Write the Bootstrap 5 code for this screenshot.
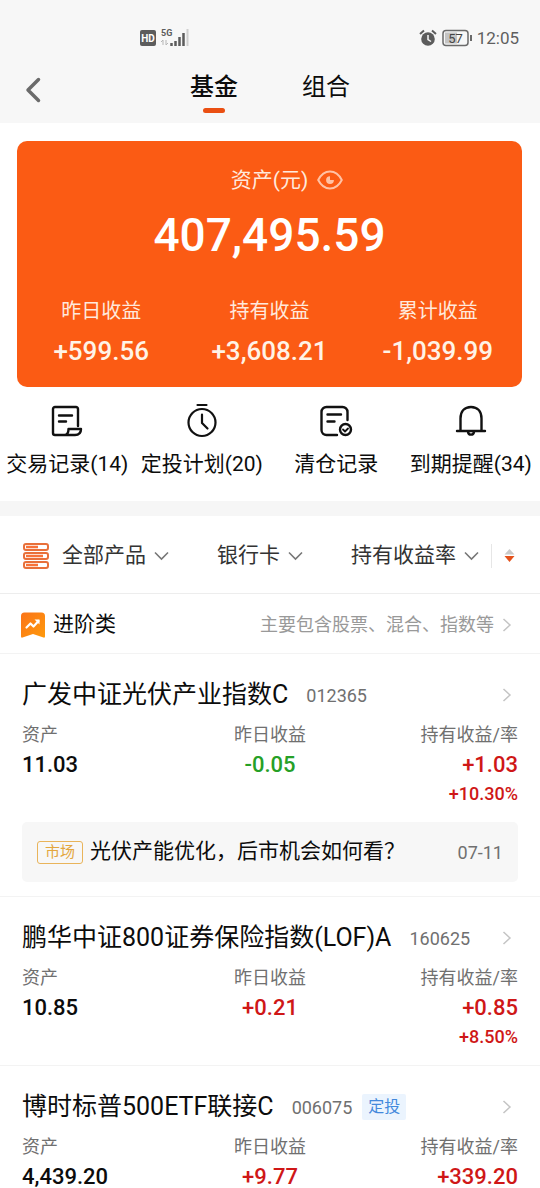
<!DOCTYPE html>
<html lang="zh-CN">
<head>
<meta charset="utf-8">
<meta name="viewport" content="width=device-width, initial-scale=1">
<title>基金</title>
<link href="https://cdn.jsdelivr.net/npm/bootstrap@5.3.0/dist/css/bootstrap.min.css" rel="stylesheet">
<style>
  :root { --brand: #fb5b14; --ink: #0c0c0c; --muted: #707070; --line: #f3f3f3; }
  body { font-family: Roboto, "Noto Sans CJK SC", sans-serif; color: var(--ink); background: #fff; }
  svg { display: block; flex: none; }
  a { color: inherit; text-decoration: none; }
  button { color: inherit; background: none; border: 0; padding: 0; }
  .top-area { background: #f7f7f7; }
  .status { height: 60px; padding: 16px 21px 0 139px; color: #5f5f5f; font-size: 17px; line-height: 44px; }
  .status-row { height: 44px; }
  .tabs-bar { display: grid; grid-template-columns: 1fr auto 1fr; height: 63px; padding: 0 25px; }
  .tab-set { gap: 64px; }
  .tab-link { font-size: 24px; line-height: 36px; padding: 9px 0 0; height: 52px; }
  .tab-link.is-on { font-weight: 500; }
  .tab-link.is-on::after { content: ""; display: block; width: 22px; height: 5px; border-radius: 3px; background: #ea4f12; margin: 3px auto 0; }
  .assets { margin: 18px 18px 0 17px; padding: 23px 0 16px; border-radius: 10px; background: var(--brand); color: #fff; }
  .assets-title { font-size: 21px; line-height: 32px; color: #ffe9dc; gap: 9px; padding-left: 35px; }
  .assets-total { font-size: 46px; line-height: 64px; font-weight: 500; margin: 7px 0 24px; }
  .stat-label { font-size: 20px; line-height: 40px; color: #ffe9dc; }
  .stat-num { font-size: 26px; line-height: 40px; font-weight: 500; color: #fff3e6; }
  .quick { padding: 16px 2px 21px 0; }
  .quick a { font-size: 21px; line-height: 32px; gap: 10px; white-space: nowrap; flex: 1 1 0; }
  .band { height: 15px; background: #f6f6f6; }
  .filters { height: 78px; padding: 2px 25px 0 22px; border-bottom: 1px solid #ededed; font-size: 21px; color: #333; }
  .filters button { gap: 8px; white-space: nowrap; }
  .sorter { border-left: 1px solid #e6e6e6; height: 24px; padding-left: 12px; margin-left: 12px; }
  .group-head { height: 60px; padding: 2px 28px 0 21px; border-bottom: 1px solid var(--line); font-size: 21px; }
  .group-note { font-size: 18px; color: #999; gap: 8px; }
  .fund { padding: 21px 22px 14px; border-bottom: 1px solid var(--line); }
  .fund-head { height: 40px; padding-right: 6px; }
  .fund-name { font-size: 25px; line-height: 40px; font-weight: 400; margin: 0 18px 0 0; }
  .fund-code { font-size: 18px; color: var(--muted); }
  .plan-tag { font-size: 16px; line-height: 26px; padding: 0 6px; margin-left: 10px; border-radius: 2px; background: #ebf4fe; color: #4389dc; }
  .figures { margin: 5px 0 0; }
  .figures dt { font-size: 18px; line-height: 30px; font-weight: 400; color: var(--muted); }
  .figures dd { font-size: 22px; line-height: 30px; font-weight: 500; margin: 0; }
  .figures .rate { font-size: 18px; line-height: 28px; }
  .up { color: #cf1717; }
  .down { color: #26a026; }
  .news { height: 60px; margin-top: 14px; padding: 0 15px; border-radius: 5px; background: #f7f7f7; font-size: 21px; }
  .news-tag { font-size: 15px; line-height: 21px; padding: 0 7px; border: 1px solid #e9b45a; border-radius: 3px; color: #e3a63f; margin-right: 7px; }
  .news time { font-size: 18px; color: var(--muted); }
</style>
</head>
<body>
<div class="vh-100 overflow-hidden">
  <header class="top-area">
    <div class="status">
      <div class="status-row d-flex align-items-center">
        <svg width="50" height="22" viewBox="0 0 50 22" aria-hidden="true">
          <rect x="1" y="3" width="16" height="16" rx="2" fill="#5c5c5c"/>
          <text x="9" y="15" font-size="10" font-weight="700" fill="#fff" text-anchor="middle">HD</text>
          <text x="22" y="9" font-size="9" font-weight="700" fill="#5c5c5c">5G</text>
          <path d="M24 18v-5l-2 2M27 13v5l2-2" fill="none" stroke="#b5b5b5"/>
          <path d="M32.500 16v3M36.500 14v5M40.500 10v9M44.500 6v13" stroke="#5c5c5c" stroke-width="2.500"/>
          <path d="M48.500 2v17" stroke="#cfcfcf" stroke-width="2"/>
        </svg>
        <svg class="ms-auto" width="18" height="18" viewBox="0 0 18 18" aria-hidden="true">
          <circle cx="9" cy="10" r="6.800" fill="#5c5c5c"/>
          <path d="M1 5l4-3.500M17 5l-4-3.500" stroke="#5c5c5c" stroke-width="2"/>
          <path d="M9 6v4.500l3 2" fill="none" stroke="#f7f7f7" stroke-width="1.500"/>
        </svg>
        <svg class="ms-1 me-1" width="32" height="18" viewBox="0 0 32 18" aria-hidden="true">
          <rect x="2" y="1.500" width="25" height="15" rx="3" fill="none" stroke="#6a6a6a" stroke-width="1.500"/>
          <rect x="4" y="3.500" width="12" height="11" fill="#c4c4c4"/>
          <text x="14.500" y="13.500" font-size="13" fill="#444" text-anchor="middle">57</text>
          <path d="M30 6v6" stroke="#6a6a6a" stroke-width="2"/>
        </svg>
        <span>12:05</span>
      </div>
    </div>
    <nav class="tabs-bar">
      <button type="button" class="text-start pb-1" aria-label="返回">
        <svg width="16" height="26" viewBox="0 0 16 26"><path d="M13.500 2.500L3 13l10.500 10.500" fill="none" stroke="#6b6b6b" stroke-width="3.500" stroke-linecap="round" stroke-linejoin="round"/></svg>
      </button>
      <div class="tab-set d-flex">
        <a href="#" class="tab-link is-on" aria-current="page">基金</a>
        <a href="#" class="tab-link">组合</a>
      </div>
    </nav>
  </header>

  <main>
    <section class="assets text-center">
      <div class="assets-title d-flex justify-content-center align-items-center">
        <span>资产(元)</span>
        <button type="button" aria-label="隐藏金额">
          <svg width="26" height="20" viewBox="0 0 26 20" fill="none" stroke="#ffc2a5" stroke-width="2">
            <path d="M1.200 10C4 4.500 8 1.500 13 1.500S22 4.500 24.800 10C22 15.500 18 18.500 13 18.500S4 15.500 1.200 10z" stroke-linejoin="round"/>
            <path d="M13 6.200a3.900 3.900 0 1 0 3.900 3.900h-3.400a.5.500 0 0 1-.5-.5z" fill="#ffc2a5" stroke="none"/>
          </svg>
        </button>
      </div>
      <div class="assets-total">407,495.59</div>
      <div class="row g-0">
        <div class="col"><div class="stat-label">昨日收益</div><div class="stat-num">+599.56</div></div>
        <div class="col"><div class="stat-label">持有收益</div><div class="stat-num">+3,608.21</div></div>
        <div class="col"><div class="stat-label">累计收益</div><div class="stat-num">-1,039.99</div></div>
      </div>
    </section>

    <nav class="quick d-flex">
      <a href="#" class="d-flex flex-column align-items-center">
        <svg width="34" height="35" viewBox="0 0 34 35" fill="none" stroke="#111" stroke-width="2.400" stroke-linecap="round" stroke-linejoin="round">
          <path d="M28 23V6a2 2 0 0 0-2-2H5a2 2 0 0 0-2 2v24a2 2 0 0 0 2 2h20c4 0 6-2 6-6H18.500c0 3-1 6-4 6M9 12.500h13M9 18.500h7"/>
        </svg>
        <span>交易记录(14)</span>
      </a>
      <a href="#" class="d-flex flex-column align-items-center">
        <svg width="34" height="35" viewBox="0 0 34 35" fill="none" stroke="#111" stroke-width="2.200" stroke-linecap="round" stroke-linejoin="round">
          <circle cx="17" cy="19.500" r="13.500"/><path d="M12.500 2h9M17 11.500v8.500l5.500 5.500"/>
        </svg>
        <span>定投计划(20)</span>
      </a>
      <a href="#" class="d-flex flex-column align-items-center">
        <svg width="34" height="35" viewBox="0 0 34 35" fill="none" stroke="#111" stroke-width="2.400" stroke-linecap="round" stroke-linejoin="round">
          <path d="M28.500 17V9a5 5 0 0 0-5-5h-16a5 5 0 0 0-5 5v18a5 5 0 0 0 5 5H18M8.500 11.500H22M8.500 18.500h7"/>
          <circle cx="26.500" cy="26.500" r="5.500"/><path d="M24 26.500l2 2 3-3" stroke-width="1.800"/>
        </svg>
        <span>清仓记录</span>
      </a>
      <a href="#" class="d-flex flex-column align-items-center">
        <svg width="34" height="35" viewBox="0 0 34 35" fill="none" stroke="#111" stroke-width="2.400" stroke-linecap="round" stroke-linejoin="round">
          <path d="M6.500 28V15.500C6.500 8.500 10.500 4 17 4s10.500 4.500 10.500 11.500V28M3 28h28M14 29c.5 3.500 5.500 3.500 6 0"/>
        </svg>
        <span>到期提醒(34)</span>
      </a>
    </nav>

    <div class="band"></div>

    <div class="filters d-flex align-items-center justify-content-between">
      <button type="button" class="d-flex align-items-center">
        <svg width="28" height="28" viewBox="0 0 28 28" fill="#fff" stroke="#e8703a" stroke-width="2">
          <rect x="2" y="2" width="24" height="6" rx="2"/><rect x="2" y="11" width="24" height="6" rx="2"/><rect x="2" y="20" width="24" height="6" rx="2"/>
          <path d="M4 5h12M4 14h17M4 23h12" stroke="#f8733a" stroke-width="2.500"/>
        </svg>
        <span class="ms-1">全部产品</span>
        <svg width="15" height="10" viewBox="0 0 15 10"><path d="M1 1.500l6.500 6.500L14 1.500" fill="none" stroke="#777" stroke-width="1.600"/></svg>
      </button>
      <button type="button" class="d-flex align-items-center">
        <span>银行卡</span>
        <svg width="15" height="10" viewBox="0 0 15 10"><path d="M1 1.500l6.500 6.500L14 1.500" fill="none" stroke="#777" stroke-width="1.600"/></svg>
      </button>
      <div class="d-flex align-items-center">
        <button type="button" class="d-flex align-items-center">
          <span>持有收益率</span>
          <svg width="15" height="10" viewBox="0 0 15 10"><path d="M1 1.500l6.500 6.500L14 1.500" fill="none" stroke="#777" stroke-width="1.600"/></svg>
        </button>
        <button type="button" class="sorter d-flex align-items-center" aria-label="降序">
          <svg width="11" height="13" viewBox="0 0 11 13"><path d="M5.500 0L10.500 5.500H.5z" fill="#c9c9c9"/><path d="M5.500 13L.5 7h10z" fill="#e4521b"/></svg>
        </button>
      </div>
    </div>

    <a href="#" class="group-head d-flex align-items-center justify-content-between">
      <span class="d-flex align-items-center">
        <svg class="me-2" width="24" height="26" viewBox="0 0 24 26">
          <defs><linearGradient id="flag" x1="0" y1="0" x2="1" y2="1"><stop offset="0" stop-color="#fb7318"/><stop offset="1" stop-color="#fe9a0c"/></linearGradient></defs>
          <path d="M3.500.5h17a3.500 3.500 0 0 1 3.500 3.500v20.500q0 1.500-1.500 1L12 22 1.500 25.500q-1.500.5-1.500-1V4A3.500 3.500 0 0 1 3.500.5z" fill="url(#flag)"/>
          <path d="M5.500 15.500l4-4 3 3 5-5.500" fill="none" stroke="#fff" stroke-width="2.200" stroke-linejoin="round" stroke-linecap="round"/><path d="M13.500 7.500h5v5z" fill="#fff"/>
        </svg>
        <span>进阶类</span>
      </span>
      <span class="group-note d-flex align-items-center">主要包含股票、混合、指数等
        <svg width="10" height="14" viewBox="0 0 10 14"><path d="M1.500 1L8 7l-6.500 6" fill="none" stroke="#c4c4c4" stroke-width="1.500"/></svg>
      </span>
    </a>

    <article class="fund">
      <a href="#" class="fund-head d-flex align-items-center">
        <h2 class="fund-name">广发中证光伏产业指数C</h2><span class="fund-code">012365</span>
        <svg class="ms-auto" width="10" height="14" viewBox="0 0 10 14"><path d="M1.500 1L8 7l-6.500 6" fill="none" stroke="#c4c4c4" stroke-width="1.500"/></svg>
      </a>
      <div class="figures row g-0">
        <dl class="col mb-0"><dt>资产</dt><dd>11.03</dd></dl>
        <dl class="col mb-0 text-center"><dt>昨日收益</dt><dd class="down">-0.05</dd></dl>
        <dl class="col mb-0 text-end"><dt>持有收益/率</dt><dd class="up">+1.03</dd><dd class="up rate">+10.30%</dd></dl>
      </div>
      <a href="#" class="news d-flex align-items-center">
        <span class="news-tag">市场</span><span>光伏产能优化，后市机会如何看？</span><time class="ms-auto">07-11</time>
      </a>
    </article>

    <article class="fund">
      <a href="#" class="fund-head d-flex align-items-center">
        <h2 class="fund-name">鹏华中证800证券保险指数(LOF)A</h2><span class="fund-code">160625</span>
        <svg class="ms-auto" width="10" height="14" viewBox="0 0 10 14"><path d="M1.500 1L8 7l-6.500 6" fill="none" stroke="#c4c4c4" stroke-width="1.500"/></svg>
      </a>
      <div class="figures row g-0">
        <dl class="col mb-0"><dt>资产</dt><dd>10.85</dd></dl>
        <dl class="col mb-0 text-center"><dt>昨日收益</dt><dd class="up">+0.21</dd></dl>
        <dl class="col mb-0 text-end"><dt>持有收益/率</dt><dd class="up">+0.85</dd><dd class="up rate">+8.50%</dd></dl>
      </div>
    </article>

    <article class="fund">
      <a href="#" class="fund-head d-flex align-items-center">
        <h2 class="fund-name">博时标普500ETF联接C</h2><span class="fund-code">006075</span><span class="plan-tag">定投</span>
        <svg class="ms-auto" width="10" height="14" viewBox="0 0 10 14"><path d="M1.500 1L8 7l-6.500 6" fill="none" stroke="#c4c4c4" stroke-width="1.500"/></svg>
      </a>
      <div class="figures row g-0">
        <dl class="col mb-0"><dt>资产</dt><dd>4,439.20</dd></dl>
        <dl class="col mb-0 text-center"><dt>昨日收益</dt><dd class="up">+9.77</dd></dl>
        <dl class="col mb-0 text-end"><dt>持有收益/率</dt><dd class="up">+339.20</dd></dl>
      </div>
    </article>
  </main>
</div>
<script src="https://cdn.jsdelivr.net/npm/bootstrap@5.3.0/dist/js/bootstrap.bundle.min.js"></script>
</body>
</html>
